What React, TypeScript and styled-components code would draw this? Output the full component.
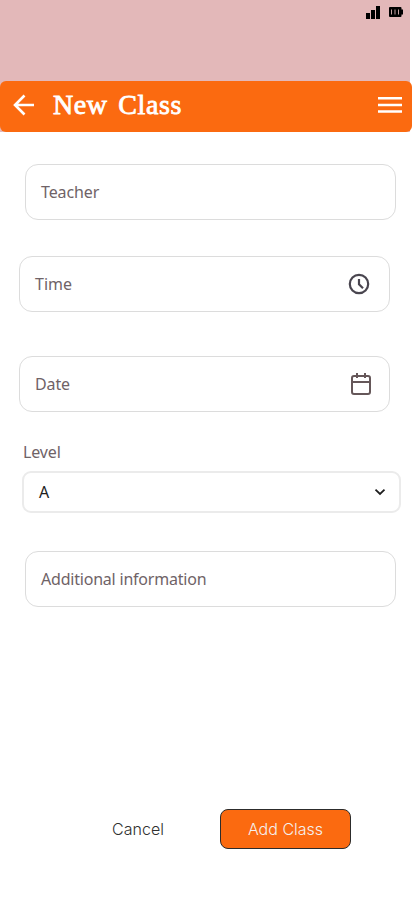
import React from "react";
import styled, { createGlobalStyle } from "styled-components";

const GlobalStyle = createGlobalStyle`
  * { box-sizing: border-box; }
  body { margin: 0; background: #fff; }
  button { appearance: none; margin: 0; padding: 0; border: 0; background: none; cursor: pointer; }
  svg { display: block; flex: none; }
`;

const Screen = styled.main`
  width: 412px;
  height: 917px;
  overflow: hidden;
  display: flex;
  flex-direction: column;
  background: #fff;
`;

const Top = styled.div`
  height: 132px;
  background: linear-gradient(to right, #e3b8b9 410px, #fff 410px);
`;

const StatusBar = styled.div`
  height: 81px;
  padding: 6px 9px 0 0;
  display: flex;
  justify-content: flex-end;
  gap: 9px;
`;

const AppBar = styled.header`
  height: 51px;
  padding: 0 10px 0 12px;
  display: flex;
  align-items: center;
  border-radius: 6px;
  background: #fb6a10;
`;

const IconButton = styled.button`
  display: flex;
  padding-bottom: 3px;
`;

const Title = styled.h1`
  flex: 1;
  margin: 0 0 3px 18px;
  color: #fff;
  font: 400 28px/36px "Liberation Serif", serif;
  letter-spacing: 0.6px;
  word-spacing: 3px;
  -webkit-text-stroke: 0.8px #fff;
  white-space: nowrap;
`;

const Form = styled.form`
  display: flex;
  flex-direction: column;
  align-items: flex-start;
  padding-top: 32px;
`;

const Field = styled.div<{ $left: number; $gap: number; $end?: number }>`
  width: 371px;
  height: 56px;
  margin: 0 0 ${(p) => p.$gap}px ${(p) => p.$left}px;
  padding: 0 ${(p) => p.$end ?? 15}px 0 15px;
  display: flex;
  align-items: center;
  justify-content: space-between;
  border: 1px solid #dcdcdc;
  border-radius: 13px;
`;

const Label = styled.span<{ $spacing?: number }>`
  color: #6f6367;
  font: 400 16px/24px "Noto Sans", sans-serif;
  letter-spacing: ${(p) => p.$spacing ?? -0.12}px;
  white-space: nowrap;
`;

const LevelGroup = styled.div`
  margin: 0 0 38px 22px;
  display: flex;
  flex-direction: column;
  gap: 7px;
  ${Label} { margin-left: 1px; }
`;

const Select = styled.div`
  width: 379px;
  height: 42px;
  padding: 0 13px 0 15px;
  display: flex;
  align-items: center;
  justify-content: space-between;
  border: 2px solid #ebebeb;
  border-radius: 9px;
  color: #1e1e1e;
`;

const SelectValue = styled.span`
  font: 400 16px/24px "Noto Sans", sans-serif;
`;

const Actions = styled.div`
  margin: 202px 0 0 112px;
  display: flex;
  align-items: center;
  gap: 56px;
`;

const Action = styled.button<{ $primary?: boolean }>`
  width: ${(p) => (p.$primary ? "131px" : "52px")};
  height: 40px;
  border: ${(p) => (p.$primary ? "1px solid #2c2c2c" : "0")};
  border-radius: 8px;
  background: ${(p) => (p.$primary ? "#fb6a10" : "transparent")};
  color: ${(p) => (p.$primary ? "#f5f0ee" : "#303030")};
  font: ${(p) => (p.$primary ? 350 : 360)} 16px/16px Inter, sans-serif;
  white-space: nowrap;
`;

const SignalIcon = () => (
  <svg width="14" height="13" viewBox="0 0 14 13">
    <path d="M0 7h4v6H0zM5 4h4v9H5zM10 0h4v13h-4z" fill="#000" />
  </svg>
);

const BatteryIcon = () => (
  <svg width="14" height="13" viewBox="0 0 14 13">
    <path d="M1 1h10.5q1 0 1 1v1.5H14v5h-1.5V10q0 1-1 1H1q-1 0-1-1V2q0-1 1-1z" fill="#000" />
    <path d="M2.5 3.5v5M6 3.5v5M9.5 3.5v5" stroke="#c6a1a2" />
  </svg>
);

const BackIcon = () => (
  <svg width="23" height="22" viewBox="0 0 23 22" fill="none" stroke="#fff" strokeWidth="2.6">
    <path d="M12.5 1.5 3 11l9.5 9.5M2.5 11h19.5" />
  </svg>
);

const MenuIcon = () => (
  <svg width="24" height="18" viewBox="0 0 24 18">
    <path d="M0 2.2h24M0 9h24M0 15.5h24" stroke="#fff" strokeWidth="2.6" />
  </svg>
);

const ClockIcon = () => (
  <svg width="22" height="22" viewBox="0 0 22 22" fill="none" stroke="#49454f" strokeWidth="2.2">
    <circle cx="11" cy="11" r="9.2" />
    <path d="M11 6v5.3l4 4" />
  </svg>
);

const CalendarIcon = () => (
  <svg width="22" height="24" viewBox="0 0 22 24" fill="none" stroke="#655759" strokeWidth="2">
    <rect x="2" y="4" width="18" height="18" rx="2" />
    <path d="M2 10h18M7 1v5M15 1v5" />
  </svg>
);

const ChevronIcon = () => (
  <svg width="12" height="8" viewBox="0 0 12 8" fill="none" stroke="#1e1e1e" strokeWidth="1.8">
    <path d="m1.5 1.7 4.5 4.3 4.5-4.3" />
  </svg>
);

export default function App() {
  return (
    <>
      <GlobalStyle />
      <Screen>
        <Top>
          <StatusBar><SignalIcon /><BatteryIcon /></StatusBar>
          <AppBar>
            <IconButton aria-label="Back"><BackIcon /></IconButton>
            <Title>New Class</Title>
            <IconButton aria-label="Menu"><MenuIcon /></IconButton>
          </AppBar>
        </Top>
        <Form onSubmit={(e) => e.preventDefault()}>
          <Field $left={25} $gap={36}><Label>Teacher</Label></Field>
          <Field $left={19} $gap={44} $end={19}><Label $spacing={0}>Time</Label><ClockIcon /></Field>
          <Field $left={19} $gap={28} $end={17}><Label>Date</Label><CalendarIcon /></Field>
          <LevelGroup>
            <Label>Level</Label>
            <Select><SelectValue>A</SelectValue><ChevronIcon /></Select>
          </LevelGroup>
          <Field $left={25} $gap={0}><Label $spacing={-0.21}>Additional information</Label></Field>
          <Actions>
            <Action type="button">Cancel</Action>
            <Action type="submit" $primary>Add Class</Action>
          </Actions>
        </Form>
      </Screen>
    </>
  );
}
